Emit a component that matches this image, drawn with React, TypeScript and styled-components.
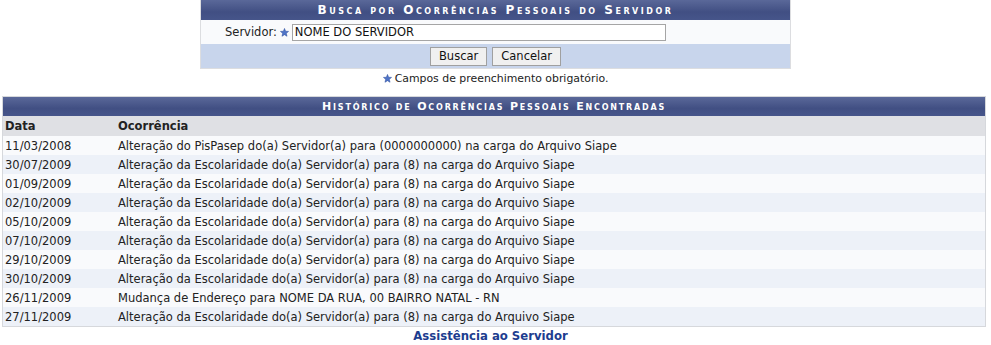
import React from "react";
import styled, { createGlobalStyle } from "styled-components";

const Global = createGlobalStyle`
  body {
    margin: 0;
    background: #fff;
    font-family: "DejaVu Sans", Verdana, sans-serif;
    font-size: 11.5px;
    color: #222;
  }
`;

const Page = styled.div`
  width: 991px;
  display: flex;
  flex-direction: column;
  align-items: center;
`;

const FormBox = styled.div`
  width: 589px;
  border: 1px solid #dcdde0;
  border-top: none;
`;

const Caption = styled.div<{ $size: number; $spacing: number; $h: number }>`
  height: ${(p) => p.$h}px;
  display: flex;
  align-items: center;
  justify-content: center;
  background: linear-gradient(#5a6899, #414f83 60%, #46558a);
  color: #fff;
  font-weight: bold;
  font-variant: small-caps;
  font-size: ${(p) => p.$size}px;
  letter-spacing: ${(p) => p.$spacing}px;
`;

const FieldRow = styled.div`
  height: 24px;
  background: #f9fafc;
  display: flex;
  align-items: center;
  padding-left: 24px;
  gap: 3px;
`;

const Label = styled.span`
  color: #222;
`;

const Input = styled.input`
  width: 368px;
  height: 13px;
  border: 1px solid #a5a5a5;
  padding: 1px 2px;
  font: inherit;
  color: #111;
`;

const ButtonRow = styled.div`
  height: 24px;
  background: #c8d5ec;
  display: flex;
  align-items: center;
  justify-content: center;
  gap: 5px;
`;

const Button = styled.button`
  height: 19px;
  padding: 0 8px;
  font: inherit;
  color: #111;
  background: #f0f0f0;
  border: 1px solid #a0a0a0;
`;

const Note = styled.div`
  margin-top: 3px;
  font-size: 10.9px;
  display: flex;
  align-items: center;
  gap: 3px;
  height: 12px;
`;

const Table = styled.table`
  margin-top: 12px;
  width: 984px;
  border-collapse: collapse;
  border: 1px solid #d6d8dc;
  align-self: flex-start;
  margin-left: 2px;
`;

const TitleCell = styled.td`
  padding: 0;
`;

const Th = styled.th<{ $w?: number }>`
  height: 20px;
  padding: 0 0 0 2px;
  text-align: left;
  background: #dfe0e4;
  font-weight: bold;
  width: ${(p) => (p.$w ? p.$w + "px" : "auto")};
`;

const Row = styled.tr<{ $odd: boolean }>`
  background: ${(p) => (p.$odd ? "#edf1f8" : "#f9fafc")};
`;

const Td = styled.td`
  height: 19px;
  padding: 0 0 0 2px;
`;

const FootLink = styled.a`
  margin-top: 2px;
  margin-right: 10px;
  color: #1d3d8f;
  font-weight: bold;
  text-decoration: none;
  font-size: 11.7px;
`;

function Star() {
  return (
    <svg width="9" height="9" viewBox="0 0 10 10">
      <path
        d="M5 0.5 L6.2 3.6 L9.5 3.8 L7 5.9 L7.8 9.2 L5 7.4 L2.2 9.2 L3 5.9 L0.5 3.8 L3.8 3.6 Z"
        fill="#4f74c8"
        stroke="#2d4e9e"
        strokeWidth="0.6"
      />
    </svg>
  );
}

const alt = "Alteração da Escolaridade do(a) Servidor(a) para (8) na carga do Arquivo Siape";

const items = [
  { data: "11/03/2008", oc: "Alteração do PisPasep do(a) Servidor(a) para (0000000000) na carga do Arquivo Siape" },
  { data: "30/07/2009", oc: alt },
  { data: "01/09/2009", oc: alt },
  { data: "02/10/2009", oc: alt },
  { data: "05/10/2009", oc: alt },
  { data: "07/10/2009", oc: alt },
  { data: "29/10/2009", oc: alt },
  { data: "30/10/2009", oc: alt },
  { data: "26/11/2009", oc: "Mudança de Endereço para NOME DA RUA, 00 BAIRRO NATAL - RN" },
  { data: "27/11/2009", oc: alt },
];

export default function App() {
  return (
    <Page>
      <Global />
      <FormBox>
        <Caption $size={12} $spacing={2.5} $h={20}>
          Busca por Ocorrências Pessoais do Servidor
        </Caption>
        <FieldRow>
          <Label>Servidor:</Label>
          <Star />
          <Input defaultValue="NOME DO SERVIDOR" />
        </FieldRow>
        <ButtonRow>
          <Button>Buscar</Button>
          <Button>Cancelar</Button>
        </ButtonRow>
      </FormBox>
      <Note>
        <Star />
        Campos de preenchimento obrigatório.
      </Note>
      <Table>
        <tbody>
          <tr>
            <TitleCell colSpan={2}>
              <Caption $size={11} $spacing={1.8} $h={19}>
                Histórico de Ocorrências Pessoais Encontradas
              </Caption>
            </TitleCell>
          </tr>
          <tr>
            <Th $w={111}>Data</Th>
            <Th>Ocorrência</Th>
          </tr>
          {items.map((it, i) => (
            <Row key={i} $odd={i % 2 === 1}>
              <Td>{it.data}</Td>
              <Td>{it.oc}</Td>
            </Row>
          ))}
        </tbody>
      </Table>
      <FootLink href="#">Assistência ao Servidor</FootLink>
    </Page>
  );
}
